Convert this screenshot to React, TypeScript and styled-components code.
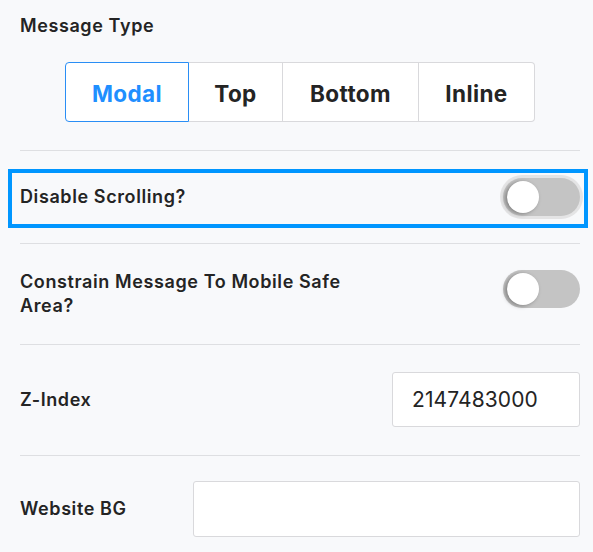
import React, { useState } from "react";
import styled, { createGlobalStyle, css } from "styled-components";

const Global = createGlobalStyle`
  html, body { margin: 0; padding: 0; background: #f8f9fb; }
  body { font-family: Inter, "Noto Sans", Lato, sans-serif; color: #242424; }
  * { box-sizing: border-box; }
`;

const Page = styled.div`
  width: 593px;
  padding: 0 13px 0 20px;
`;

const Section = styled.div`
  border-bottom: 1px solid #dedfe2;
  padding: 14px 0 28px;
`;

const Heading = styled.div`
  font-size: 18px;
  font-weight: 600;
  line-height: 24px;
  letter-spacing: 0.6px;
`;

const Segmented = styled.div`
  display: flex;
  justify-content: center;
  margin-top: 24px;
`;

const Seg = styled.button<{ $w: number; $active?: boolean; $first?: boolean; $last?: boolean }>`
  width: ${(p) => p.$w}px;
  height: 60px;
  background: #fff;
  font-family: inherit;
  font-size: 22.5px;
  font-weight: 700;
  letter-spacing: 0.4px;
  color: #242424;
  border: 1px solid #d9d9dc;
  border-left-width: ${(p) => (p.$first ? 1 : 0)}px;
  border-radius: ${(p) => (p.$first ? "4px 0 0 4px" : p.$last ? "0 4px 4px 0" : "0")};
  padding: 2px 0 0;
  cursor: pointer;
  ${(p) =>
    p.$active &&
    css`
      color: #1f8fff;
      border: 1px solid #2a8ef5;
    `}
`;

const Row = styled.div<{ $pt: number; $pb: number; $align?: string; $last?: boolean }>`
  display: flex;
  align-items: ${(p) => p.$align || "center"};
  justify-content: space-between;
  gap: 20px;
  padding: ${(p) => p.$pt}px 0 ${(p) => p.$pb}px;
  border-bottom: ${(p) => (p.$last ? "none" : "1px solid #dedfe2")};
`;

const Field = styled.div<{ $focused?: boolean }>`
  position: relative;
  flex: 1;
  display: flex;
  align-items: center;
  justify-content: space-between;
  gap: 20px;
  ${(p) =>
    p.$focused &&
    css`
      &::after {
        content: "";
        position: absolute;
        left: -12px;
        right: -8px;
        top: -9px;
        bottom: -12px;
        border: 4px solid #0096ff;
        pointer-events: none;
      }
    `}
`;

const Label = styled.div<{ $w?: number }>`
  font-size: 18px;
  font-weight: 600;
  line-height: 24px;
  letter-spacing: 0.6px;
  ${(p) => p.$w && css`width: ${p.$w}px; flex: none;`}
`;

const Track = styled.button<{ $halo?: boolean }>`
  position: relative;
  width: 77px;
  height: 38px;
  border-radius: 19px;
  border: none;
  background: #c4c4c4;
  padding: 0;
  flex: none;
  cursor: pointer;
  ${(p) => p.$halo && css`box-shadow: 0 0 0 3px #e4e4e5;`}
`;

const Knob = styled.span`
  position: absolute;
  left: 4px;
  top: 3px;
  width: 32px;
  height: 32px;
  border-radius: 50%;
  background: #fff;
  box-shadow: -2px 1px 4px rgba(0, 0, 0, 0.35);
`;

const Input = styled.input<{ $w?: number; $h: number }>`
  ${(p) => (p.$w ? css`width: ${p.$w}px; flex: none;` : css`flex: 1; min-width: 0;`)}
  height: ${(p) => p.$h}px;
  border: 1px solid #d9d9dc;
  border-radius: 3px;
  background: #fff;
  padding: 0 19px;
  font-family: inherit;
  font-size: 21px;
  letter-spacing: 0.1px;
  color: #242424;
  outline: none;
`;

function Toggle({ halo }: { halo?: boolean }) {
  return (
    <Track $halo={halo} aria-label="toggle">
      <Knob />
    </Track>
  );
}

export default function App() {
  const [type, setType] = useState("Modal");
  const types: [string, number][] = [
    ["Modal", 124],
    ["Top", 94],
    ["Bottom", 136],
    ["Inline", 116],
  ];
  return (
    <Page>
      <Global />
      <Section>
        <Heading>Message Type</Heading>
        <Segmented>
          {types.map(([t, w], i) => (
            <Seg
              key={t}
              $w={w}
              $first={i === 0}
              $last={i === types.length - 1}
              $active={type === t}
              onClick={() => setType(t)}
            >
              {t}
            </Seg>
          ))}
        </Segmented>
      </Section>
      <Row $pt={27} $pb={27}>
        <Field $focused>
          <Label>Disable Scrolling?</Label>
          <Toggle halo />
        </Field>
      </Row>
      <Row $pt={26} $pb={26} $align="flex-start">
        <Label $w={345}>Constrain Message To Mobile Safe Area?</Label>
        <Toggle />
      </Row>
      <Row $pt={27} $pb={28}>
        <Label>Z-Index</Label>
        <Input $w={188} $h={55} defaultValue="2147483000" />
      </Row>
      <Row $pt={25} $pb={20} $last>
        <Label $w={153}>Website BG</Label>
        <Input $h={56} defaultValue="" />
      </Row>
    </Page>
  );
}
